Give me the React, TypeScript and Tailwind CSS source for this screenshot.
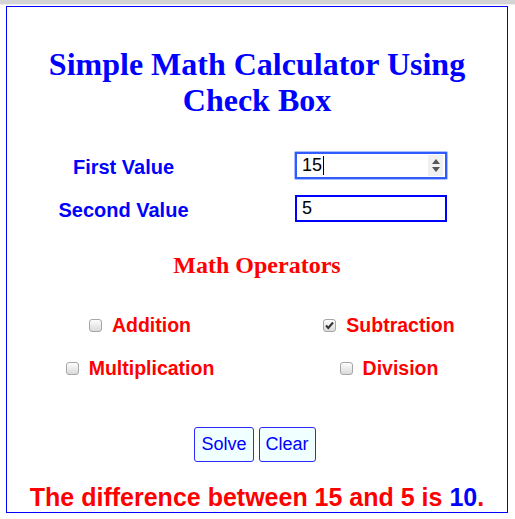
import React from "react";

const comic = { fontFamily: '"Liberation Sans", Arial, sans-serif' };

function Check({ checked }: { checked?: boolean }) {
  return (
    <span className="relative inline-block w-[13px] h-[13px] rounded-[3px] border border-[#a6a6a6] bg-gradient-to-b from-[#fdfdfd] to-[#dadada] shrink-0">
      {checked && (
        <svg viewBox="0 0 13 13" className="absolute left-[-1px] top-[-1px] w-[13px] h-[13px]">
          <path d="M3 6.5 L5.3 9 L10 3.5" fill="none" stroke="#333" strokeWidth="2" />
        </svg>
      )}
    </span>
  );
}

function Op({ label, checked }: { label: string; checked?: boolean }) {
  return (
    <div className="flex items-center gap-[10px]">
      <Check checked={checked} />
      <span className="text-[19.5px] font-bold text-[#ff0000] leading-[28px]" style={comic}>
        {label}
      </span>
    </div>
  );
}

export default function App() {
  return (
    <div className="w-[515px] h-[519px] bg-white overflow-hidden">
      <div className="h-[4px] bg-[#d4d4d4]" />
      <div className="h-[1px] bg-[#ececec]" />
      <div className="ml-[6px] mt-[1px] w-[502px] h-[507px] border border-[#0000ff] flex flex-col">
        <h1
          className="mt-[39px] text-center text-[32px] leading-[36px] font-bold text-[#0000ff]"
          style={{ fontFamily: '"Liberation Serif", "Times New Roman", serif' }}
        >
          Simple Math Calculator Using
          <br />
          Check Box
        </h1>

        <div className="mt-[34px] flex items-center h-[27px]">
          <div className="w-[233px] text-center text-[20px] font-bold text-[#0000ff] pt-[2px]" style={comic}>
            First Value
          </div>
          <div className="ml-[54px] w-[154px] h-[29px] p-[1px] rounded-[2px] bg-[#a8bdff]">
            <div className="w-full h-full border-2 border-[#2f5cff] bg-white flex items-center pl-[5px] pr-[2px]">
              <span className="text-[18px] text-black" style={{ fontFamily: '"Liberation Sans", Arial, sans-serif' }}>
                15
              </span>
              <span className="w-[1px] h-[19px] bg-black ml-[1px]" />
              <div className="ml-auto w-[15px] h-[21px] bg-[#f0f0f0] flex flex-col items-center justify-center gap-[3px]">
                <svg width="8" height="5" viewBox="0 0 8 5"><path d="M0 5 L4 0 L8 5 Z" fill="#555" /></svg>
                <svg width="8" height="5" viewBox="0 0 8 5"><path d="M0 0 L4 5 L8 0 Z" fill="#555" /></svg>
              </div>
            </div>
          </div>
        </div>

        <div className="mt-[16px] flex items-center h-[27px]">
          <div className="w-[233px] text-center text-[20px] font-bold text-[#0000ff] pt-[2px]" style={comic}>
            Second Value
          </div>
          <div className="ml-[55px] w-[152px] h-[27px] border-2 border-[#0000ff] bg-white flex items-center pl-[5px]">
            <span className="text-[18px] text-black" style={{ fontFamily: '"Liberation Sans", Arial, sans-serif' }}>
              5
            </span>
          </div>
        </div>

        <h2
          className="mt-[29px] text-center text-[24px] leading-[28px] font-bold text-[#ff0000]"
          style={{ fontFamily: '"Liberation Serif", "Times New Roman", serif' }}
        >
          Math Operators
        </h2>

        <div className="mt-[32px] grid grid-cols-[266px_232px] gap-y-[15px]">
          <div className="flex justify-center">
            <Op label="Addition" />
          </div>
          <div className="flex justify-center">
            <Op label="Subtraction" checked />
          </div>
          <div className="flex justify-center">
            <Op label="Multiplication" />
          </div>
          <div className="flex justify-center">
            <Op label="Division" />
          </div>
        </div>

        <div className="mt-[45px] flex justify-center gap-[5px] pr-[4px]">
          <button
            className="h-[35px] px-[6px] rounded-[3px] border border-[#2a2aff] bg-[#f0ffff] text-[18px] text-[#0000ff]"
            style={{ fontFamily: '"Liberation Sans", Arial, sans-serif' }}
          >
            Solve
          </button>
          <button
            className="h-[35px] px-[6px] rounded-[3px] border border-[#2a2aff] bg-[#f0ffff] text-[18px] text-[#0000ff]"
            style={{ fontFamily: '"Liberation Sans", Arial, sans-serif' }}
          >
            Clear
          </button>
        </div>

        <p className="mt-[21px] text-center text-[25px] leading-[28px] font-bold text-[#ff0000]" style={comic}>
          The difference between 15 and 5 is <span className="text-[#0000ff]">10</span>.
        </p>
      </div>
    </div>
  );
}
